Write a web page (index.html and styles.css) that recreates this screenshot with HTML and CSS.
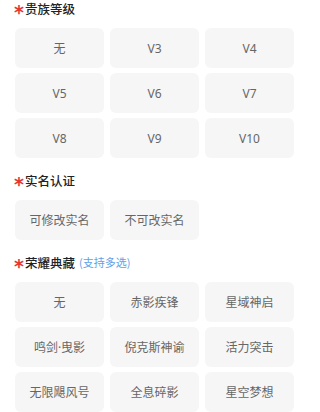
FILE: index.html
```html
<!DOCTYPE html>
<html lang="zh">
<head>
<meta charset="utf-8">
<link rel="stylesheet" href="styles.css">
</head>
<body>
<div class="page">
  <div class="section first">
    <div class="title"><span class="star">*</span>贵族等级</div>
    <div class="grid">
      <div class="opt">无</div>
      <div class="opt">V3</div>
      <div class="opt">V4</div>
      <div class="opt">V5</div>
      <div class="opt">V6</div>
      <div class="opt">V7</div>
      <div class="opt">V8</div>
      <div class="opt">V9</div>
      <div class="opt">V10</div>
    </div>
  </div>
  <div class="section">
    <div class="title"><span class="star">*</span>实名认证</div>
    <div class="grid">
      <div class="opt">可修改实名</div>
      <div class="opt">不可改实名</div>
    </div>
  </div>
  <div class="section">
    <div class="title"><span class="star">*</span>荣耀典藏<span class="hint">(支持多选)</span></div>
    <div class="grid">
      <div class="opt">无</div>
      <div class="opt">赤影疾锋</div>
      <div class="opt">星域神启</div>
      <div class="opt">鸣剑·曳影</div>
      <div class="opt">倪克斯神谕</div>
      <div class="opt">活力突击</div>
      <div class="opt">无限飓风号</div>
      <div class="opt">全息碎影</div>
      <div class="opt">星空梦想</div>
    </div>
  </div>
</div>
</body>
</html>
```

FILE: styles.css
```css
html, body {
  margin: 0;
  padding: 0;
  background: #ffffff;
}
body {
  font-family: "Noto Sans", "Noto Sans CJK SC", sans-serif;
  overflow: hidden;
}
.page {
  padding: 0 0 0 15px;
}
.section {
  margin-top: 12px;
}
.section.first {
  margin-top: -2px;
}
.title {
  display: flex;
  align-items: center;
  height: 20px;
  font-size: 12.5px;
  font-weight: 500;
  color: #222222;
  margin-left: -1px;
  margin-bottom: 10px;
  font-family: "Noto Sans CJK SC", sans-serif;
}
.star {
  color: #e2382f;
  font-size: 19px;
  font-weight: 700;
  width: 11px;
  line-height: 20px;
  height: 20px;
  padding-top: 4px;
  box-sizing: border-box;
  font-family: "DejaVu Sans", sans-serif;
}
.hint {
  color: #5ba3e8;
  font-size: 11px;
  font-weight: 400;
  margin-left: 4px;
}
.grid {
  display: grid;
  width: 279px;
  grid-template-columns: repeat(3, 1fr);
  gap: 5px 6px;
}
.opt {
  height: 40px;
  border-radius: 6px;
  background: #f6f6f6;
  display: flex;
  align-items: center;
  justify-content: center;
  font-size: 12px;
  color: #666666;
}
```
